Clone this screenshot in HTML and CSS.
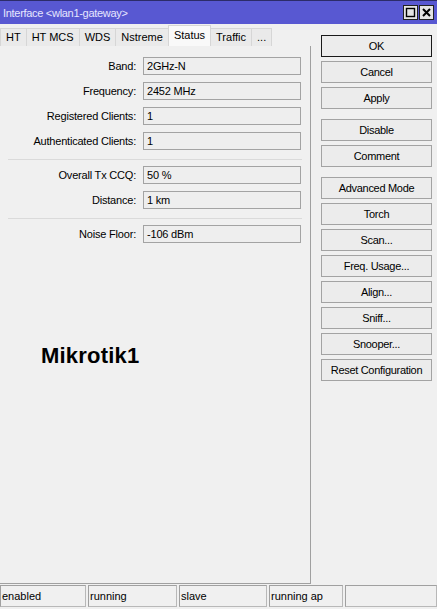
FILE: index.html
```html
<!DOCTYPE html>
<html lang="en">
<head>
    <meta charset="UTF-8">
    <meta name="viewport" content="width=device-width, initial-scale=1.0">
    <title>Interface &lt;wlan1-gateway&gt;</title>
    <link rel="stylesheet" href="styles.css">
</head>
<body>
<div class="window">
    <!-- title bar -->
    <div class="titlebar">
        <span class="title">Interface &lt;wlan1-gateway&gt;</span>
        <div class="controls">
            <span class="ctl">
                <svg width="13" height="13" viewBox="0 0 13 13"><rect x="2.5" y="2.5" width="8" height="8" fill="none" stroke="#000" stroke-width="1.4"/></svg>
            </span>
            <span class="ctl">
                <svg width="13" height="13" viewBox="0 0 13 13"><path d="M3 3 L10 10 M10 3 L3 10" stroke="#000" stroke-width="2"/></svg>
            </span>
        </div>
    </div>

    <div class="main">
        <div class="left">
            <div class="tabs">
                <span class="tab">HT</span>
                <span class="tab">HT MCS</span>
                <span class="tab">WDS</span>
                <span class="tab">Nstreme</span>
                <span class="tab active">Status</span>
                <span class="tab">Traffic</span>
                <span class="tab">...</span>
            </div>

            <div class="panel">
                <div class="group">
                    <div class="row"><label>Band:</label><div class="field">2GHz-N</div></div>
                    <div class="row"><label>Frequency:</label><div class="field">2452 MHz</div></div>
                    <div class="row"><label>Registered Clients:</label><div class="field">1</div></div>
                    <div class="row"><label>Authenticated Clients:</label><div class="field">1</div></div>
                </div>
                <div class="sep"></div>
                <div class="group">
                    <div class="row"><label>Overall Tx CCQ:</label><div class="field">50 %</div></div>
                    <div class="row"><label>Distance:</label><div class="field">1 km</div></div>
                </div>
                <div class="sep"></div>
                <div class="group">
                    <div class="row"><label>Noise Floor:</label><div class="field">-106 dBm</div></div>
                </div>

                <div class="router-name">Mikrotik1</div>
            </div>
        </div>

        <!-- action buttons -->
        <div class="buttons">
            <button class="btn default">OK</button>
            <button class="btn">Cancel</button>
            <button class="btn">Apply</button>
            <button class="btn gap">Disable</button>
            <button class="btn">Comment</button>
            <button class="btn gap">Advanced Mode</button>
            <button class="btn">Torch</button>
            <button class="btn">Scan...</button>
            <button class="btn">Freq. Usage...</button>
            <button class="btn">Align...</button>
            <button class="btn">Sniff...</button>
            <button class="btn">Snooper...</button>
            <button class="btn">Reset Configuration</button>
        </div>
    </div>

    <div class="statusbar">
        <span class="cell w1">enabled</span>
        <span class="cell w2">running</span>
        <span class="cell w3">slave</span>
        <span class="cell w4">running ap</span>
        <span class="cell w5"></span>
    </div>
</div>
</body>
</html>
```

FILE: styles.css
```css
* { box-sizing: border-box; }
body { margin: 0; background-color: #f0f0f0; font-family: "Liberation Sans", Arial, sans-serif; font-size: 11px; color: #000; }
.window { width: 437px; height: 609px; display: flex; flex-direction: column; background-color: #f0f0f0; }

.titlebar { height: 24px; display: flex; align-items: center; justify-content: space-between; background-color: #5858d2; border-top: 1px solid #2c2c6a; padding: 0 3px 0 3px; }
.title { color: #e6e6ff; font-size: 11px; letter-spacing: -0.3px; }
.controls { display: flex; gap: 1px; }
.ctl { width: 15px; height: 15px; border: 1px solid #222; background-color: #e4e4e4; display: flex; align-items: center; justify-content: center; }

.main { display: flex; height: 560px; }
.left { width: 311px; display: flex; flex-direction: column; }

.tabs { height: 22px; display: flex; align-items: flex-end; }
.tab { height: 18px; padding: 0 5px; line-height: 17px; border: 1px solid #d6d6d6; border-bottom: none; background-color: #eaeaea; margin-right: -1px; font-size: 11px; }
.tab.active { height: 21px; line-height: 18px; background-color: #f9f9f9; position: relative; z-index: 1; }

.panel { flex: 1; border-right: 1px solid #a0a0a0; border-bottom: 1px solid #a0a0a0; padding: 11px 8px 0 0; }
.group { display: flex; flex-direction: column; gap: 7px; }
.row { display: flex; align-items: center; height: 18px; }
.row label { width: 137px; text-align: right; padding-right: 1px; letter-spacing: -0.2px; }
.field { margin-left: 6px; width: 158px; height: 18px; border: 1px solid #a3a3a3; background-color: #eeeeee; padding-left: 3px; line-height: 16px; letter-spacing: -0.2px; }
.sep { height: 1px; background-color: #dadada; margin: 9px 0 6px 8px; }

.router-name { margin: 100px 0 0 41px; font-size: 22px; font-weight: bold; letter-spacing: 0.2px; }

.buttons { display: flex; flex-direction: column; gap: 4px; padding: 11px 0 0 10px; }
.btn { width: 111px; height: 22px; border: 1px solid #a3a3a3; background-color: #ececec; font-family: "Liberation Sans", Arial, sans-serif; font-size: 11px; letter-spacing: -0.3px; color: #000; padding: 0; }
.btn.default { border-color: #1a1a1a; }
.btn.gap { margin-top: 6px; }

.statusbar { display: flex; gap: 2px; margin-top: 1px; height: 22px; }
.cell { height: 22px; border: 1px solid #b8b8b8; border-top-color: #a0a0a0; border-left-color: #a0a0a0; padding-left: 1px; line-height: 20px; }
.w1 { width: 86px; }
.w2 { width: 89px; }
.w3 { width: 88px; }
.w4 { width: 74px; }
.w5 { flex: 1; }
```
